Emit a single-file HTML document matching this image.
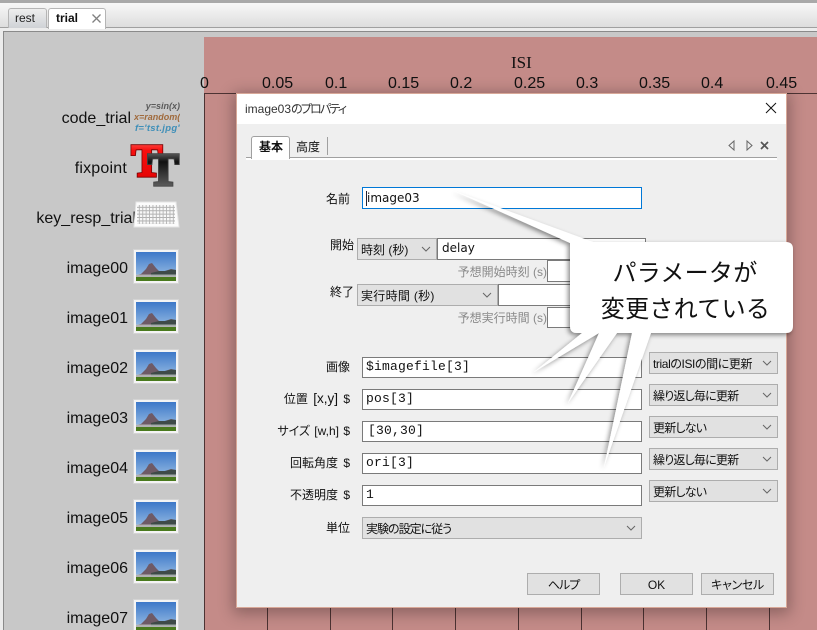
<!DOCTYPE html>
<html lang="ja"><head><meta charset="utf-8">
<style>
html,body{margin:0;padding:0;width:817px;height:630px;overflow:hidden}
#w{position:absolute;left:0;top:0;width:817px;height:630px;overflow:hidden;background:#c8c8c8;font-family:"Liberation Sans","Noto Sans CJK JP",sans-serif;font-size:12px;color:#111;font-feature-settings:"palt"}
.a{position:absolute;white-space:nowrap;line-height:1}
.box{position:absolute;box-sizing:border-box}
.inp{position:absolute;box-sizing:border-box;background:#fff;border:1px solid #7a7a7a;height:21px;line-height:18px;padding-left:3px;white-space:nowrap}
.mono{font-family:"Liberation Mono",monospace;font-size:13px;letter-spacing:.2px}
.sel{position:absolute;box-sizing:border-box;background:#e1e1e1;border:1px solid #adadad;height:22px;line-height:23px;padding-left:3px;white-space:nowrap;font-size:12px}
.sel svg{position:absolute;right:5px;top:7px}
.cn{letter-spacing:-.8px}
.lab{position:absolute;right:467px;white-space:nowrap;font-size:12px;line-height:14px;word-spacing:2px}
.gl{position:absolute;right:270px;white-space:nowrap;font-size:12px;line-height:14px;color:#8a8a8a;font-feature-settings:normal}
.btn{position:absolute;box-sizing:border-box;width:73px;height:22px;top:573px;background:#e1e1e1;border:1px solid #adadad;text-align:center;line-height:23px}
.tr{position:absolute;right:689px;font-size:16px;line-height:20px;white-space:nowrap;color:#111}
.ix{position:absolute;font-size:16px;line-height:18px;top:75px;color:#111}
.tick{position:absolute;width:1px;background:#4d3333}
</style></head><body><div id="w">

<!-- top strip -->
<div class="box" style="left:0;top:0;width:817px;height:3px;background:#a9a9a9"></div>
<div class="box" style="left:0;top:3px;width:817px;height:25px;background:linear-gradient(#f8f8f8,#dcdcdc)"></div>
<div class="box" style="left:0;top:27px;width:817px;height:1px;background:#a0a0a0"></div>
<div class="box" style="left:0;top:28px;width:817px;height:3px;background:#ececec"></div>
<div class="box" style="left:3px;top:31px;width:814px;height:1px;background:#8a8a8a"></div>
<div class="box" style="left:3px;top:31px;width:1px;height:599px;background:#8a8a8a"></div>
<div class="box" style="left:0;top:31px;width:3px;height:599px;background:#ececec"></div>
<div class="box" style="left:8px;top:8px;width:39px;height:20px;background:linear-gradient(#eee,#cfd2d6);border:1px solid #b5b5b5;border-bottom:0;border-radius:3px 3px 0 0"></div>
<div class="a" style="left:15px;top:12px;color:#222">rest</div>
<div class="box" style="left:48px;top:8px;width:58px;height:21px;background:#fff;border:1px solid #b5b5b5;border-bottom:0;border-radius:3px 3px 0 0"></div>
<div class="a" style="left:56px;top:12px;font-weight:bold;color:#111">trial</div>
<svg class="box" style="left:91px;top:13px" width="11" height="11"><path d="M1.5 1.5L9.5 9.5M9.5 1.5L1.5 9.5" stroke="#808080" stroke-width="1.3"/></svg>

<!-- timeline -->
<div class="box" style="left:204px;top:37px;width:613px;height:593px;background:#c48b88"></div>
<div class="a" style="left:511px;top:53px;font:17px 'Liberation Serif',serif;color:#111">ISI</div>
<div class="ix" style="left:200px">0</div>
<div class="ix" style="left:262px">0.05</div>
<div class="ix" style="left:325px">0.1</div>
<div class="ix" style="left:388px">0.15</div>
<div class="ix" style="left:450px">0.2</div>
<div class="ix" style="left:514px">0.25</div>
<div class="ix" style="left:576px">0.3</div>
<div class="ix" style="left:639px">0.35</div>
<div class="ix" style="left:701px">0.4</div>
<div class="ix" style="left:766px">0.45</div>
<div class="box" style="left:204px;top:93px;width:613px;height:1px;background:#4d3333"></div>
<div class="tick" style="left:204px;top:93px;height:537px"></div>
<div class="tick" style="left:267px;top:93px;height:537px"></div>
<div class="tick" style="left:330px;top:93px;height:537px"></div>
<div class="tick" style="left:392px;top:93px;height:537px"></div>
<div class="tick" style="left:455px;top:93px;height:537px"></div>
<div class="tick" style="left:518px;top:93px;height:537px"></div>
<div class="tick" style="left:581px;top:93px;height:537px"></div>
<div class="tick" style="left:643px;top:93px;height:537px"></div>
<div class="tick" style="left:706px;top:93px;height:537px"></div>
<div class="tick" style="left:769px;top:93px;height:537px"></div>

<!-- routine labels -->
<div class="tr" style="top:109px;right:686px">code_trial</div>
<div class="tr" style="top:159px;right:690px;letter-spacing:.2px">fixpoint</div>
<div class="tr" style="top:209px;right:681px">key_resp_trial</div>
<div class="tr" style="top:259px">image00</div>
<div class="tr" style="top:309px">image01</div>
<div class="tr" style="top:359px">image02</div>
<div class="tr" style="top:409px">image03</div>
<div class="tr" style="top:459px">image04</div>
<div class="tr" style="top:509px">image05</div>
<div class="tr" style="top:559px">image06</div>
<div class="tr" style="top:609px">image07</div>

<!-- icons -->
<div class="a" style="right:637px;top:102px;font-size:9px;font-weight:bold;font-style:italic;color:#5a5a5a">y=sin(x)</div>
<div class="a" style="left:134px;width:46px;overflow:hidden;top:113px;font-size:9px;font-weight:bold;font-style:italic;color:#a06a3c">x=random(,</div>
<div class="a" style="right:637px;top:124px;font-size:9.5px;letter-spacing:.3px;font-weight:bold;font-style:italic;color:#3f8fb8">f='tst.jpg'</div>

<svg class="box" style="left:130px;top:140px" width="54" height="54">
<defs>
<linearGradient id="r" x1="0" y1="0" x2="0" y2="1"><stop offset="0" stop-color="#ff8a80"/><stop offset=".3" stop-color="#f81010"/><stop offset="1" stop-color="#e00000"/></linearGradient>
<linearGradient id="k" x1="0" y1="0" x2="0" y2="1"><stop offset="0" stop-color="#aaa"/><stop offset=".35" stop-color="#111"/><stop offset="1" stop-color="#777"/></linearGradient>
</defs>
<text x="1.5" y="36" font-family="Liberation Serif,serif" font-weight="bold" font-size="46" fill="url(#r)" stroke="#700" stroke-width="3.4" paint-order="stroke">T</text>
<text x="1.5" y="36" font-family="Liberation Serif,serif" font-weight="bold" font-size="46" fill="url(#r)" stroke="url(#r)" stroke-width="1.8">T</text>
<text x="18" y="45" font-family="Liberation Serif,serif" font-weight="bold" font-size="46" fill="url(#k)" stroke="#444" stroke-width="3.4" paint-order="stroke">T</text>
<text x="18" y="45" font-family="Liberation Serif,serif" font-weight="bold" font-size="46" fill="url(#k)" stroke="url(#k)" stroke-width="1.8">T</text>
</svg>

<svg class="box" style="left:133px;top:201px" width="47" height="28">
<defs><pattern id="kp" width="3.4" height="3.4" patternUnits="userSpaceOnUse"><rect width="3.4" height="3.4" fill="#f8f8f8"/><rect x="0" y="2.5" width="3.4" height=".9" fill="#aaa"/><rect x="2.5" y="0" width=".9" height="3.4" fill="#b4b4b4"/></pattern></defs>
<path d="M3 1H43L46 26H1Z" fill="#fcfcfc" stroke="#e4e4e4"/>
<rect x="4" y="4" width="38" height="19" fill="url(#kp)"/>
</svg>

<svg width="0" height="0" style="position:absolute"><defs>
<linearGradient id="sky" x1="0" y1="0" x2="0" y2="1"><stop offset="0" stop-color="#3d78c8"/><stop offset="1" stop-color="#a4c6e8"/></linearGradient>
<symbol id="ph" viewBox="0 0 46 35">
<rect x=".5" y=".5" width="45" height="34" fill="#f4f4f4" stroke="#d4d4d4"/>
<rect x="3" y="3" width="40" height="29" fill="url(#sky)"/>
<path d="M3 26L8 25L13 20L16 15L19 14L23 19L26 22L32 22L38 20L43 21V28H3Z" fill="#6e5a66"/>
<path d="M18 24L26 22L32 22L38 20.5L43 21V27H18Z" fill="#3e4a48"/>
<path d="M3 25.5H43V28H3Z" fill="#cfd4d4" opacity=".7"/>
<rect x="3" y="28" width="40" height="4" fill="#4a7a1e"/>
</symbol></defs></svg>
<svg class="box" style="left:133px;top:249px" width="46" height="35"><use href="#ph"/></svg>
<svg class="box" style="left:133px;top:299px" width="46" height="35"><use href="#ph"/></svg>
<svg class="box" style="left:133px;top:349px" width="46" height="35"><use href="#ph"/></svg>
<svg class="box" style="left:133px;top:399px" width="46" height="35"><use href="#ph"/></svg>
<svg class="box" style="left:133px;top:449px" width="46" height="35"><use href="#ph"/></svg>
<svg class="box" style="left:133px;top:499px" width="46" height="35"><use href="#ph"/></svg>
<svg class="box" style="left:133px;top:549px" width="46" height="35"><use href="#ph"/></svg>
<svg class="box" style="left:133px;top:599px" width="46" height="35"><use href="#ph"/></svg>

<!-- dialog -->
<div class="box" style="left:237px;top:94px;width:549px;height:513px;background:#efefef;box-shadow:0 0 0 1px #d8a898,0 3px 14px 4px rgba(0,0,0,.28)"></div>
<div class="box" style="left:237px;top:94px;width:549px;height:30px;background:#fff"></div>
<div class="a" style="left:245px;top:103px;color:#333">image03<span style="letter-spacing:-1.8px">のプロパティ</span></div>
<svg class="box" style="left:765px;top:102px" width="12" height="12"><path d="M1 1L11 11M11 1L1 11" stroke="#111" stroke-width="1"/></svg>

<!-- notebook tabs -->
<div class="box" style="left:246px;top:158px;width:531px;height:2px;background:#fff"></div>
<div class="box" style="left:246px;top:157px;width:531px;height:1px;background:#a0a0a0"></div>
<div class="box" style="left:251px;top:136px;width:39px;height:23px;background:#fff;border:1px solid #a0a0a0;border-bottom:0;border-radius:3px 3px 0 0"></div>
<div class="a" style="left:259px;top:141px;font-weight:bold">基本</div>
<div class="a" style="left:296px;top:141px">高度</div>
<div class="box" style="left:327px;top:137px;width:1px;height:18px;background:#a0a0a0"></div>
<svg class="box" style="left:726px;top:139px" width="44" height="13">
<path d="M8 2L3 6.5L8 11Z" fill="none" stroke="#666"/>
<path d="M21 2L26 6.5L21 11Z" fill="none" stroke="#666"/>
<path d="M35 3L42 10M42 3L35 10" stroke="#555" stroke-width="1.7"/>
</svg>

<!-- form -->
<div class="lab" style="top:192px">名前</div>
<div class="inp" style="left:362px;top:187px;width:280px;height:22px;border-color:#0078d7;padding-left:4px;line-height:20px;font-family:'DejaVu Sans','Noto Sans CJK JP',sans-serif;font-size:12px"><span style="position:absolute;left:3px;top:3px;width:1px;height:15px;background:#223"></span>image03</div>

<div class="a" style="left:330px;top:239px">開始</div>
<div class="sel" style="left:357px;top:238px;width:80px">時刻 (秒)<svg width="10" height="6"><path d="M1 1L5 5L9 1" fill="none" stroke="#666"/></svg></div>
<div class="inp" style="left:437px;top:238px;width:209px;height:22px;padding-left:4px;line-height:19px;font-family:'DejaVu Sans',sans-serif">delay</div>
<div class="gl" style="top:265px">予想開始時刻 (s)</div>
<div class="inp" style="left:547px;top:260px;width:99px;height:22px"></div>
<div class="a" style="left:330px;top:286px">終了</div>
<div class="sel" style="left:357px;top:284px;width:141px;letter-spacing:.3px">実行時間 (秒)<svg width="10" height="6"><path d="M1 1L5 5L9 1" fill="none" stroke="#666"/></svg></div>
<div class="inp" style="left:498px;top:284px;width:148px;height:22px"></div>
<div class="gl" style="top:311px">予想実行時間 (s)</div>
<div class="inp" style="left:547px;top:307px;width:99px;height:21px"></div>

<div class="lab" style="top:360px">画像</div>
<div class="lab" style="top:392px">位置 <span style="font-size:13.5px">[x,y]</span> $</div>
<div class="lab" style="top:424px;word-spacing:1px">サイズ [w,h] $</div>
<div class="lab" style="top:456px">回転角度 $</div>
<div class="lab" style="top:488px">不透明度 $</div>
<div class="lab" style="top:521px">単位</div>
<div class="inp mono" style="left:362px;top:357px;width:280px">$imagefile[3]</div>
<div class="inp mono" style="left:362px;top:389px;width:280px">pos[3]</div>
<div class="inp mono" style="left:362px;top:421px;width:280px;padding-left:5px">[30,30]</div>
<div class="inp mono" style="left:362px;top:453px;width:280px">ori[3]</div>
<div class="inp mono" style="left:362px;top:485px;width:280px">1</div>
<div class="sel" style="left:362px;top:517px;width:280px"><span class="cn" style="letter-spacing:-1px">実験の設定に従う</span><svg width="10" height="6"><path d="M1 1L5 5L9 1" fill="none" stroke="#666"/></svg></div>

<div class="sel" style="left:649px;top:352px;width:129px"><span style="letter-spacing:-.4px">trialのISIの間に更新</span><svg width="10" height="6"><path d="M1 1L5 5L9 1" fill="none" stroke="#666"/></svg></div>
<div class="sel" style="left:649px;top:384px;width:129px"><span class="cn">繰り返し毎に更新</span><svg width="10" height="6"><path d="M1 1L5 5L9 1" fill="none" stroke="#666"/></svg></div>
<div class="sel" style="left:649px;top:416px;width:129px"><span class="cn">更新しない</span><svg width="10" height="6"><path d="M1 1L5 5L9 1" fill="none" stroke="#666"/></svg></div>
<div class="sel" style="left:649px;top:448px;width:129px"><span class="cn">繰り返し毎に更新</span><svg width="10" height="6"><path d="M1 1L5 5L9 1" fill="none" stroke="#666"/></svg></div>
<div class="sel" style="left:649px;top:480px;width:129px"><span class="cn">更新しない</span><svg width="10" height="6"><path d="M1 1L5 5L9 1" fill="none" stroke="#666"/></svg></div>

<div class="btn" style="left:527px"><span style="letter-spacing:-1px">ヘルプ</span></div>
<div class="btn" style="left:620px">OK</div>
<div class="btn" style="left:701px"><span style="letter-spacing:-.3px">キャンセル</span></div>

<!-- callout -->
<svg class="box" style="left:0;top:0;font-feature-settings:normal" width="817" height="630">
<defs><filter id="ds" x="-10%" y="-10%" width="120%" height="120%"><feDropShadow dx="-2" dy="2" stdDeviation="2.5" flood-color="#000" flood-opacity=".45"/></filter></defs>
<path filter="url(#ds)" fill="#fff" d="M454 191L593 242H786Q793 242 793 249V326Q793 333 786 333H651L604 467L632 333H617L568 403L599 333L534 372L582 333H577Q570 333 570 326V243Z"/>
<text x="685" y="281" text-anchor="middle" font-family="Liberation Sans,Noto Sans CJK JP,sans-serif" font-size="24" letter-spacing=".3" fill="#111">パラメータが</text>
<text x="685.5" y="317" text-anchor="middle" font-family="Liberation Sans,Noto Sans CJK JP,sans-serif" font-size="24" letter-spacing=".3" fill="#111">変更されている</text>
</svg>
</div></body></html>
